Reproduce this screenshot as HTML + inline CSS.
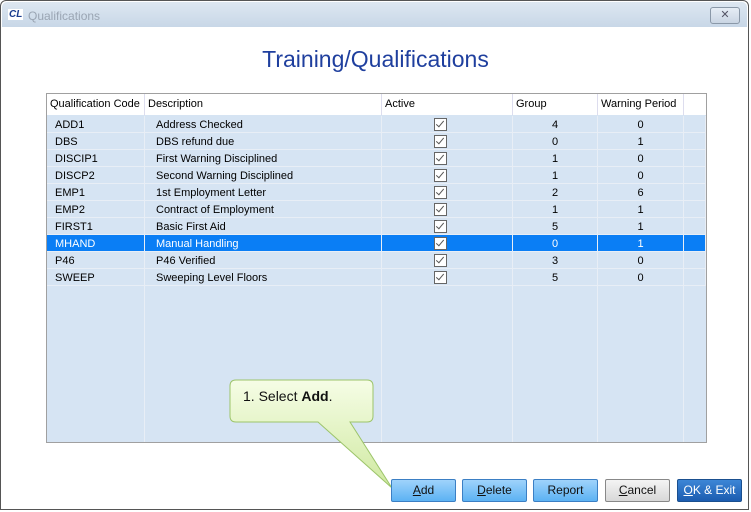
<!DOCTYPE html>
<html><head><style>
body{margin:0;width:751px;height:512px;background:#fff;font-family:"Liberation Sans",sans-serif;position:relative;overflow:hidden}
.win{position:absolute;left:0;top:0;width:747px;height:508px;border:1px solid #555;border-radius:6px 6px 0 0;background:#fff}
.tb{position:absolute;left:1px;top:1px;right:1px;height:25px;background:linear-gradient(#dde7f1,#c8d7e7);border-radius:5px 5px 0 0}
.tb .t{position:absolute;left:26px;top:7px;font-size:12px;color:#9aa5b3}
.tb .ic{position:absolute;left:6px;top:7px;font-size:10px;font-weight:bold;font-style:italic;color:#1a3d8f;background:#fff;padding:0 1px}
.x{position:absolute;right:7px;top:5px;width:28px;height:15px;border:1px solid #8a98a8;border-radius:3px;background:linear-gradient(#e6edf5,#c9d5e3);font-size:11px;text-align:center;line-height:14px;color:#556}
h1{position:absolute;left:0;width:751px;top:46px;margin:0;text-align:center;font-weight:normal;font-size:23px;color:#1f3f9e}
.grid{position:absolute;left:46px;top:93px;width:659px;height:348px;border:1px solid #a0a0a0;background:#d6e4f3}
.hdr{position:absolute;left:0;top:0;width:659px;height:21px;background:#fff;font-size:11px}
.hdr div,.row div{position:absolute;top:0;height:100%;box-sizing:border-box;border-right:1px solid #e8eef6}
.hdr div{padding:4px 3px;border-right:1px solid #dde}
.row{position:absolute;left:0;width:659px;height:17px;font-size:11px;line-height:18px;border-bottom:1px solid #e8eef6;box-sizing:border-box}
.sel{background:#0a7ef5;color:#fff}
.c1{left:0;width:98px;padding-left:8px}.c2{left:98px;width:237px;padding-left:11px}.c3{left:335px;width:131px}.c4{left:466px;width:85px;text-align:center}.c5{left:551px;width:86px;text-align:center}.c6{left:637px;width:22px}
.cb{position:absolute;left:52px;top:2px;width:11px;height:11px;border:1px solid #666;background:#fff}
.cb:after{content:"";position:absolute;left:3px;top:0px;width:3px;height:7px;border:solid #555;border-width:0 1.5px 1.5px 0;transform:rotate(40deg)}
.btn{position:absolute;top:479px;height:21px;width:63px;border:1px solid #3b7fc4;border-radius:2px;background:linear-gradient(#9fd3fb,#5cb2f3);font-size:12px;text-align:center;line-height:21px;color:#111}
.btn u{text-decoration:underline}
</style></head><body>
<div class="win">
<div class="tb"><span class="ic">CL</span><span class="t">Qualifications</span><div class="x">✕</div></div>
</div>
<h1>Training/Qualifications</h1>
<div class="grid">
<div class="hdr"><div style="left:0;width:98px">Qualification Code</div><div style="left:98px;width:237px">Description</div><div style="left:335px;width:131px">Active</div><div style="left:466px;width:85px">Group</div><div style="left:551px;width:86px">Warning Period</div><div style="left:637px;width:22px;border:none"></div></div>
<div class="row" style="top:22px"><div class="c1">ADD1</div><div class="c2">Address Checked</div><div class="c3"><span class="cb"></span></div><div class="c4">4</div><div class="c5">0</div><div class="c6"></div></div>
<div class="row" style="top:39px"><div class="c1">DBS</div><div class="c2">DBS refund due</div><div class="c3"><span class="cb"></span></div><div class="c4">0</div><div class="c5">1</div><div class="c6"></div></div>
<div class="row" style="top:56px"><div class="c1">DISCIP1</div><div class="c2">First Warning Disciplined</div><div class="c3"><span class="cb"></span></div><div class="c4">1</div><div class="c5">0</div><div class="c6"></div></div>
<div class="row" style="top:73px"><div class="c1">DISCP2</div><div class="c2">Second Warning Disciplined</div><div class="c3"><span class="cb"></span></div><div class="c4">1</div><div class="c5">0</div><div class="c6"></div></div>
<div class="row" style="top:90px"><div class="c1">EMP1</div><div class="c2">1st Employment Letter</div><div class="c3"><span class="cb"></span></div><div class="c4">2</div><div class="c5">6</div><div class="c6"></div></div>
<div class="row" style="top:107px"><div class="c1">EMP2</div><div class="c2">Contract of Employment</div><div class="c3"><span class="cb"></span></div><div class="c4">1</div><div class="c5">1</div><div class="c6"></div></div>
<div class="row" style="top:124px"><div class="c1">FIRST1</div><div class="c2">Basic First Aid</div><div class="c3"><span class="cb"></span></div><div class="c4">5</div><div class="c5">1</div><div class="c6"></div></div>
<div class="row sel" style="top:141px"><div class="c1">MHAND</div><div class="c2">Manual Handling</div><div class="c3"><span class="cb"></span></div><div class="c4">0</div><div class="c5">1</div><div class="c6"></div></div>
<div class="row" style="top:158px"><div class="c1">P46</div><div class="c2">P46 Verified</div><div class="c3"><span class="cb"></span></div><div class="c4">3</div><div class="c5">0</div><div class="c6"></div></div>
<div class="row" style="top:175px"><div class="c1">SWEEP</div><div class="c2">Sweeping Level Floors</div><div class="c3"><span class="cb"></span></div><div class="c4">5</div><div class="c5">0</div><div class="c6"></div></div>
<div class="row" style="top:192px;height:156px;border:none"><div class="c1"></div><div class="c2"></div><div class="c3"></div><div class="c4"></div><div class="c5"></div></div>
</div>
<svg style="position:absolute;left:0;top:0" width="751" height="512">
<defs><linearGradient id="g" x1="0" y1="0" x2="0" y2="1"><stop offset="0" stop-color="#f6fde6"/><stop offset="1" stop-color="#cfe9a0"/></linearGradient></defs>
<path d="M236 380 H367 Q373 380 373 386 V416 Q373 422 367 422 H350 L392 488 L318 422 H236 Q230 422 230 416 V386 Q230 380 236 380 Z" fill="url(#g)" stroke="#9cc46a" stroke-width="1"/>
<text x="243" y="401" font-size="14" font-family="Liberation Sans" fill="#111">1. Select <tspan font-weight="bold">Add</tspan>.</text>
</svg>
<div class="btn" style="left:391px"><u>A</u>dd</div>
<div class="btn" style="left:462px"><u>D</u>elete</div>
<div class="btn" style="left:533px">Report</div>
<div class="btn" style="left:605px;border-color:#888;background:linear-gradient(#f4f4f4,#d8d8d8)"><u>C</u>ancel</div>
<div class="btn" style="left:677px;border-color:#1a4f8f;background:linear-gradient(#3d86d6,#1b5cb0);color:#fff"><u>O</u>K &amp; Exit</div>
</body></html>
